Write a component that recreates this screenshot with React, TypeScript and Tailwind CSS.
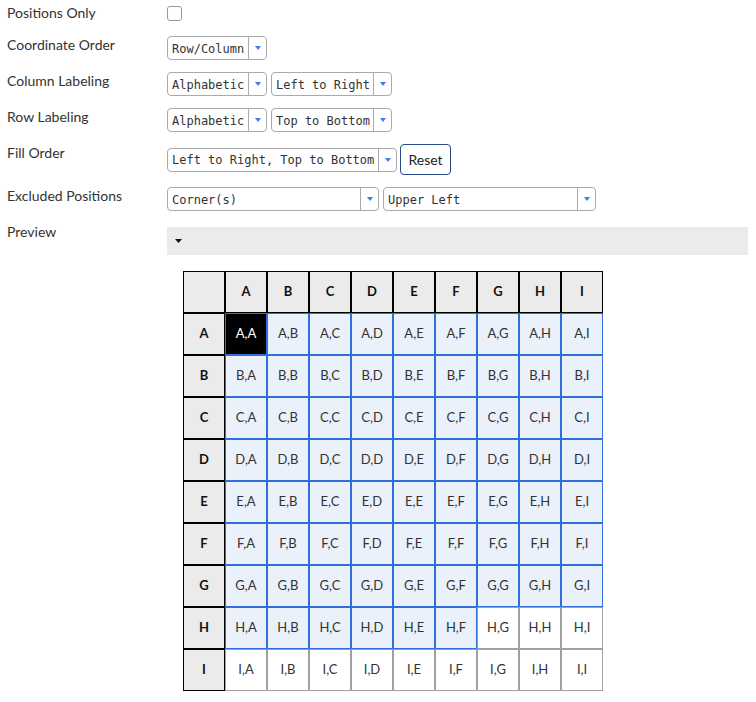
import { Fragment, type ReactNode } from 'react';

const letters = ['A', 'B', 'C', 'D', 'E', 'F', 'G', 'H', 'I'];

function isFilled(row: number, col: number): boolean {
  if (row < 7) {
    return true;
  }
  return row === 7 && col < 6;
}

function Select({ value, className }: { value: string; className: string }): JSX.Element {
  return (
    <div
      className={`flex h-[24px] items-stretch rounded-[4px] border border-[#aaaaaa] bg-white ${className}`}
    >
      <span className="flex flex-1 items-center overflow-hidden whitespace-pre pl-[4px] pt-[1px] font-['DejaVu_Sans_Mono',monospace] text-[12px] text-[#333]">
        {value}
      </span>
      <span className="flex w-[18px] items-center justify-center border-l border-[#aaaaaa]">
        <svg width="6" height="4" viewBox="0 0 6 4">
          <path d="M0 0 H6 L3 4 Z" fill="#3b7de9" />
        </svg>
      </span>
    </div>
  );
}

function Row({
  label,
  labelPad,
  className,
  children,
}: {
  label: string;
  labelPad: string;
  className: string;
  children: ReactNode;
}): JSX.Element {
  return (
    <div className={`flex items-start ${className}`}>
      <div className={`w-[167px] shrink-0 pl-[7px] text-[14px] leading-[20px] text-[#333] ${labelPad}`}>
        {label}
      </div>
      <div className="flex flex-1 items-start">{children}</div>
    </div>
  );
}

export default function App(): JSX.Element {
  return (
    <div className="min-h-[702px] bg-white pr-[8px] font-['Lato',sans-serif]">
      <Row label="Positions Only" labelPad="pt-[3px]" className="h-[36px]">
        <div className="mt-[6px] h-[15px] w-[15px] rounded-[3px] border border-[#999] bg-white" />
      </Row>
      <Row label="Coordinate Order" labelPad="-mt-[1px]" className="h-[36px]">
        <Select value="Row/Column" className="w-[100px]" />
      </Row>
      <Row label="Column Labeling" labelPad="-mt-[1px]" className="h-[36px]">
        <div className="flex gap-[4px]">
          <Select value="Alphabetic" className="w-[100px]" />
          <Select value="Left to Right" className="w-[121px]" />
        </div>
      </Row>
      <Row label="Row Labeling" labelPad="-mt-[1px]" className="h-[36px]">
        <div className="flex gap-[4px]">
          <Select value="Alphabetic" className="w-[100px]" />
          <Select value="Top to Bottom" className="w-[121px]" />
        </div>
      </Row>
      <Row label="Fill Order" labelPad="-mt-[1px]" className="h-[43px]">
        <div className="flex items-center gap-[3px]">
          <Select value="Left to Right, Top to Bottom" className="w-[230px]" />
          <button
            type="button"
            className="h-[31px] w-[51px] rounded-[4px] border border-[#2a4a8c] bg-white text-[14px] text-[#222]"
          >
            Reset
          </button>
        </div>
      </Row>
      <Row label="Excluded Positions" labelPad="-mt-[1px]" className="h-[40px]">
        <div className="flex gap-[4px]">
          <Select value="Corner(s)" className="w-[212px]" />
          <Select value="Upper Left" className="w-[213px]" />
        </div>
      </Row>
      <Row label="Preview" labelPad="-mt-[5px]" className="">
        <div className="flex-1">
          <div className="flex h-[28px] items-center bg-[#ebebeb] pl-[8px]">
            <svg width="7" height="4" viewBox="0 0 7 4">
              <path d="M0 0 H7 L3.5 4 Z" fill="#111" />
            </svg>
          </div>
          <div className="mt-[16px] ml-[16px] grid w-max grid-cols-[repeat(10,42px)] grid-rows-[repeat(10,42px)] text-[13px] text-[#333]">
            <div className="border border-black bg-[#ebebeb]" />
            {letters.map((l) => (
              <div
                key={`h-${l}`}
                className="flex items-center justify-center border border-black bg-[#ebebeb] font-bold text-[#111]"
              >
                {l}
              </div>
            ))}
            {letters.map((r, ri) => (
              <Fragment key={`row-${r}`}>
                <div className="flex items-center justify-center border border-black bg-[#ebebeb] font-bold text-[#111]">
                  {r}
                </div>
                {letters.map((c, ci) => {
                  const filled = isFilled(ri, ci);
                  const first = ri === 0 && ci === 0;
                  const cls = first
                    ? 'border-[#2f6fde] bg-black text-white'
                    : filled
                      ? 'border-[#2f6fde] bg-[#eaf1fb]'
                      : 'border-[#a0a0a0] bg-white';
                  return (
                    <div
                      key={`${r}-${c}`}
                      className={`flex items-center justify-center border ${cls}`}
                    >
                      {r},{c}
                    </div>
                  );
                })}
              </Fragment>
            ))}
          </div>
        </div>
      </Row>
    </div>
  );
}
